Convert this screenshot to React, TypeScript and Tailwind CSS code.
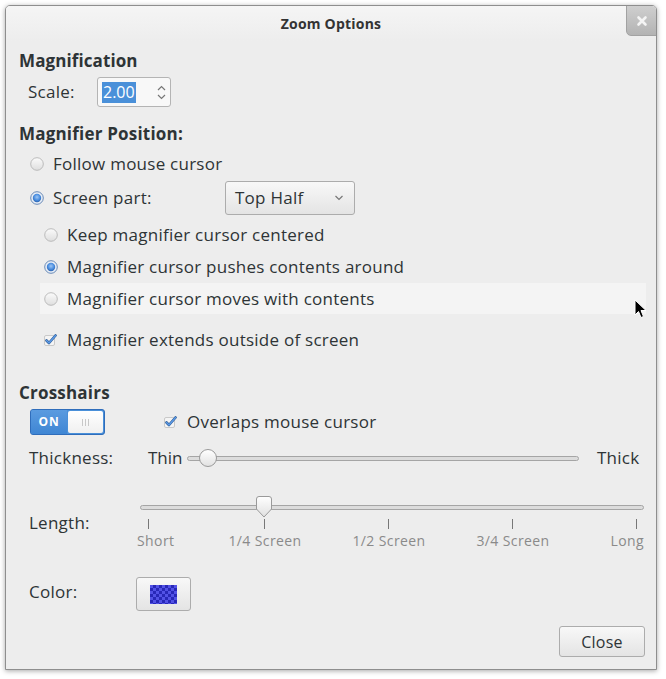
import React from "react";

function Radio({ checked }: { checked?: boolean }) {
  return checked ? (
    <svg width="14" height="14" viewBox="0 0 14 14" className="shrink-0">
      <defs>
        <radialGradient id="rb" cx="50%" cy="40%" r="60%">
          <stop offset="0%" stopColor="#9fc6f3" />
          <stop offset="60%" stopColor="#4a8ee0" />
          <stop offset="100%" stopColor="#2d64b0" />
        </radialGradient>
      </defs>
      <circle cx="7" cy="7" r="6.3" fill="#e8eef6" stroke="#5a7fb0" strokeWidth="0.9" />
      <circle cx="7" cy="7" r="4.2" fill="url(#rb)" />
    </svg>
  ) : (
    <svg width="14" height="14" viewBox="0 0 14 14" className="shrink-0">
      <defs>
        <linearGradient id="ru" x1="0" y1="0" x2="0" y2="1">
          <stop offset="0%" stopColor="#fbfbfb" />
          <stop offset="100%" stopColor="#dedede" />
        </linearGradient>
      </defs>
      <circle cx="7" cy="7" r="6.3" fill="url(#ru)" stroke="#b5b5b5" strokeWidth="0.9" />
    </svg>
  );
}

function Check() {
  return (
    <svg width="14" height="14" viewBox="0 0 14 14" className="shrink-0">
      <rect x="1.5" y="2.5" width="10" height="10" rx="1.5" fill="#f4f4f4" stroke="#c4c4c4" strokeWidth="0.9" />
      <path d="M3.5 7.5 L6 10 L12.5 2.5" fill="none" stroke="#2c5a94" strokeWidth="2.6" strokeLinecap="round" strokeLinejoin="round" />
      <path d="M3.5 7.5 L6 10 L12.5 2.5" fill="none" stroke="#5c9ae6" strokeWidth="1.4" strokeLinecap="round" strokeLinejoin="round" />
    </svg>
  );
}

export default function App() {
  const text = "text-[17px] tracking-[0.25px] text-[#2e3436]";
  const small = "absolute top-[37px] text-[14px] tracking-[0.4px] text-[#8a8a8a] leading-[17px] whitespace-nowrap";
  return (
    <div className="w-[666px] h-[679px] bg-white pt-[5px] pl-[5px] font-['Open_Sans',sans-serif] text-[#2e3436]">
      <div className="relative w-[652px] h-[665px] bg-[#ededed] border border-[#8e8e8e] rounded-t-[5px] shadow-[0_1px_5px_rgba(0,0,0,0.35)] flex flex-col overflow-hidden">
        {/* title bar */}
        <div className="h-[35px] shrink-0 flex items-center justify-center bg-gradient-to-b from-[#f5f5f5] to-[#ededed] relative">
          <span className="text-[14px] font-bold text-[#333] mt-[-1px] tracking-[0.2px]">Zoom Options</span>
          <div className="absolute right-[-1px] top-[-1px] w-[31px] h-[31px] rounded-bl-[5px] bg-gradient-to-b from-[#cfcfcf] to-[#b3b3b3] border border-[#a2a2a2] flex items-center justify-center">
            <svg width="12" height="12" viewBox="0 0 12 12">
              <path d="M2.5 2.5 L9.5 9.5 M9.5 2.5 L2.5 9.5" stroke="#f4f4f4" strokeWidth="2.6" strokeLinecap="round" />
            </svg>
          </div>
        </div>

        <div className="flex flex-col pl-[13px] pr-[11px]">
          {/* Magnification */}
          <div className="mt-[10px] h-[20px] flex items-center">
            <span className="text-[17px] font-bold tracking-[0.1px]">Magnification</span>
          </div>
          <div className="mt-[6px] h-[30px] flex items-center">
            <span className={`${text} ml-[9px] w-[69px]`}>Scale:</span>
            <div className="w-[74px] h-[30px] border border-[#b4b4b4] rounded-[3px] bg-[#f8f8f8] flex items-center pl-[4px] pr-[4px]">
              <span className="text-[16px] bg-[#4a90d9] text-white px-[1px] leading-[21px]">2.00</span>
              <div className="ml-auto flex flex-col items-center gap-[3px]">
                <svg width="9" height="6" viewBox="0 0 9 6"><path d="M1 5 L4.5 1.5 L8 5" fill="none" stroke="#777" strokeWidth="1.2" /></svg>
                <svg width="9" height="6" viewBox="0 0 9 6"><path d="M1 1 L4.5 4.5 L8 1" fill="none" stroke="#777" strokeWidth="1.2" /></svg>
              </div>
            </div>
          </div>

          {/* Magnifier position */}
          <div className="mt-[17px] h-[20px] flex items-center">
            <span className="text-[17px] font-bold tracking-[0.2px]">Magnifier Position:</span>
          </div>
          <div className="mt-[10px] h-[20px] flex items-center ml-[11px] gap-[9px]">
            <Radio />
            <span className={text}>Follow mouse cursor</span>
          </div>
          <div className="mt-[7px] h-[34px] flex items-center ml-[11px]">
            <Radio checked />
            <span className={`${text} ml-[9px] w-[172px]`}>Screen part:</span>
            <div className="w-[130px] h-[34px] border border-[#acacac] rounded-[3px] bg-gradient-to-b from-[#f8f8f8] to-[#e4e4e4] flex items-center pl-[9px] pr-[10px]">
              <span className={text}>Top Half</span>
              <svg className="ml-auto" width="10" height="6" viewBox="0 0 10 6"><path d="M1.5 1 L5 4.5 L8.5 1" fill="none" stroke="#777" strokeWidth="1.2" /></svg>
            </div>
          </div>
          <div className="mt-[10px] h-[20px] flex items-center ml-[25px] gap-[9px]">
            <Radio />
            <span className={text}>Keep magnifier cursor centered</span>
          </div>
          <div className="mt-[12px] h-[20px] flex items-center ml-[25px] gap-[9px]">
            <Radio checked />
            <span className={text}>Magnifier cursor pushes contents around</span>
          </div>
          <div className="mt-[6px] h-[31px] flex items-center ml-[21px] mr-[-1px] pl-[4px] gap-[9px] bg-[#f4f4f4]">
            <Radio />
            <span className={text}>Magnifier cursor moves with contents</span>
          </div>
          <div className="mt-[16px] h-[20px] flex items-center ml-[24px] gap-[10px]">
            <Check />
            <span className={text}>Magnifier extends outside of screen</span>
          </div>

          {/* Crosshairs */}
          <div className="mt-[33px] h-[20px] flex items-center">
            <span className="text-[17px] font-bold tracking-[0.2px]">Crosshairs</span>
          </div>
          <div className="mt-[6px] h-[26px] flex items-center ml-[11px]">
            <div className="w-[75px] h-[26px] rounded-[3px] border border-[#2f6dbb] bg-[#4a90d9] flex items-stretch overflow-hidden">
              <div className="w-[36px] flex items-center justify-center bg-gradient-to-b from-[#5a9be0] to-[#3f86d4]">
                <span className="text-[12px] font-bold text-white tracking-[0.8px]">ON</span>
              </div>
              <div className="flex-1 m-[1px] rounded-[2px] bg-gradient-to-b from-[#ffffff] to-[#f0f0f0] flex items-center justify-center gap-[2px]">
                <span className="w-px h-[7px] bg-[#c8c8c8]" />
                <span className="w-px h-[7px] bg-[#c8c8c8]" />
                <span className="w-px h-[7px] bg-[#c8c8c8]" />
              </div>
            </div>
            <div className="ml-[58px] flex items-center gap-[10px]">
              <Check />
              <span className={text}>Overlaps mouse cursor</span>
            </div>
          </div>

          {/* Thickness */}
          <div className="mt-[13px] h-[20px] flex items-center ml-[10px]">
            <span className={`${text} w-[119px] shrink-0`}>Thickness:</span>
            <span className="text-[17px] text-[#2e3436] w-[39px] shrink-0 whitespace-nowrap">Thin</span>
            <div className="relative shrink-0 w-[392px] h-[5px] rounded-full border border-[#a5a5a5] bg-[#dcdcdc]">
              <div className="absolute left-[11px] top-[-8px] w-[18px] h-[18px] rounded-full border border-[#9a9a9a] bg-gradient-to-b from-[#ffffff] to-[#e2e2e2]" />
            </div>
            <span className={`${text} ml-[18px]`}>Thick</span>
          </div>

          {/* Length */}
          <div className="mt-[27px] h-[58px] flex ml-[10px]">
            <span className={`${text} w-[111px] shrink-0 mt-[18px] h-[20px] leading-[20px]`}>Length:</span>
            <div className="relative shrink-0 w-[504px] h-[58px]">
              <div className="absolute left-0 right-0 top-[10px] h-[5px] rounded-full border border-[#a5a5a5] bg-[#dcdcdc]" />
              <svg className="absolute left-[115px] top-[1px]" width="18" height="22" viewBox="0 0 18 22">
                <defs>
                  <linearGradient id="kn" x1="0" y1="0" x2="0" y2="1">
                    <stop offset="0%" stopColor="#ffffff" />
                    <stop offset="100%" stopColor="#e0e0e0" />
                  </linearGradient>
                </defs>
                <path d="M1.5 3 Q1.5 0.5 4 0.5 L14 0.5 Q16.5 0.5 16.5 3 L16.5 13 L9 21 L1.5 13 Z" fill="url(#kn)" stroke="#9a9a9a" strokeWidth="1" />
              </svg>
              <span className="absolute left-[8px] top-[24px] w-px h-[10px] bg-[#777]" />
              <span className="absolute left-[124px] top-[24px] w-px h-[10px] bg-[#777]" />
              <span className="absolute left-[248px] top-[24px] w-px h-[10px] bg-[#777]" />
              <span className="absolute left-[372px] top-[24px] w-px h-[10px] bg-[#777]" />
              <span className="absolute left-[496px] top-[24px] w-px h-[10px] bg-[#777]" />
              <span className={`${small} left-[-3px]`}>Short</span>
              <span className={`${small} left-[125px] -translate-x-1/2`}>1/4 Screen</span>
              <span className={`${small} left-[249px] -translate-x-1/2`}>1/2 Screen</span>
              <span className={`${small} left-[373px] -translate-x-1/2`}>3/4 Screen</span>
              <span className={`${small} right-[0px]`}>Long</span>
            </div>
          </div>

          {/* Color */}
          <div className="mt-[24px] h-[34px] flex items-center ml-[10px]">
            <span className={`${text} w-[107px] mt-[-4px]`}>Color:</span>
            <div className="w-[55px] h-[34px] border border-[#acacac] rounded-[3px] bg-gradient-to-b from-[#f8f8f8] to-[#e4e4e4] flex items-center justify-center">
              <div className="w-[27px] h-[19px] bg-[#3737d0] bg-[repeating-conic-gradient(#2828b8_0%_25%,#5252e6_0%_50%)] bg-[length:6px_6px]" />
            </div>
          </div>

          {/* Close */}
          <div className="mt-[15px] flex justify-end">
            <div className="w-[86px] h-[31px] border border-[#acacac] rounded-[3px] bg-gradient-to-b from-[#f8f8f8] to-[#e4e4e4] flex items-center justify-center">
              <span className="text-[16px] tracking-[0.2px] text-[#2e3436]">Close</span>
            </div>
          </div>
        </div>

        {/* mouse pointer */}
        <svg className="absolute left-[628px] top-[293px]" width="14" height="20" viewBox="0 0 14 20">
          <path d="M1 1 L1 16 L4.5 12.5 L7 18.5 L9.5 17.5 L7 11.5 L12 11.5 Z" fill="#000" stroke="#fff" strokeWidth="1" strokeLinejoin="round" />
        </svg>
      </div>
    </div>
  );
}
